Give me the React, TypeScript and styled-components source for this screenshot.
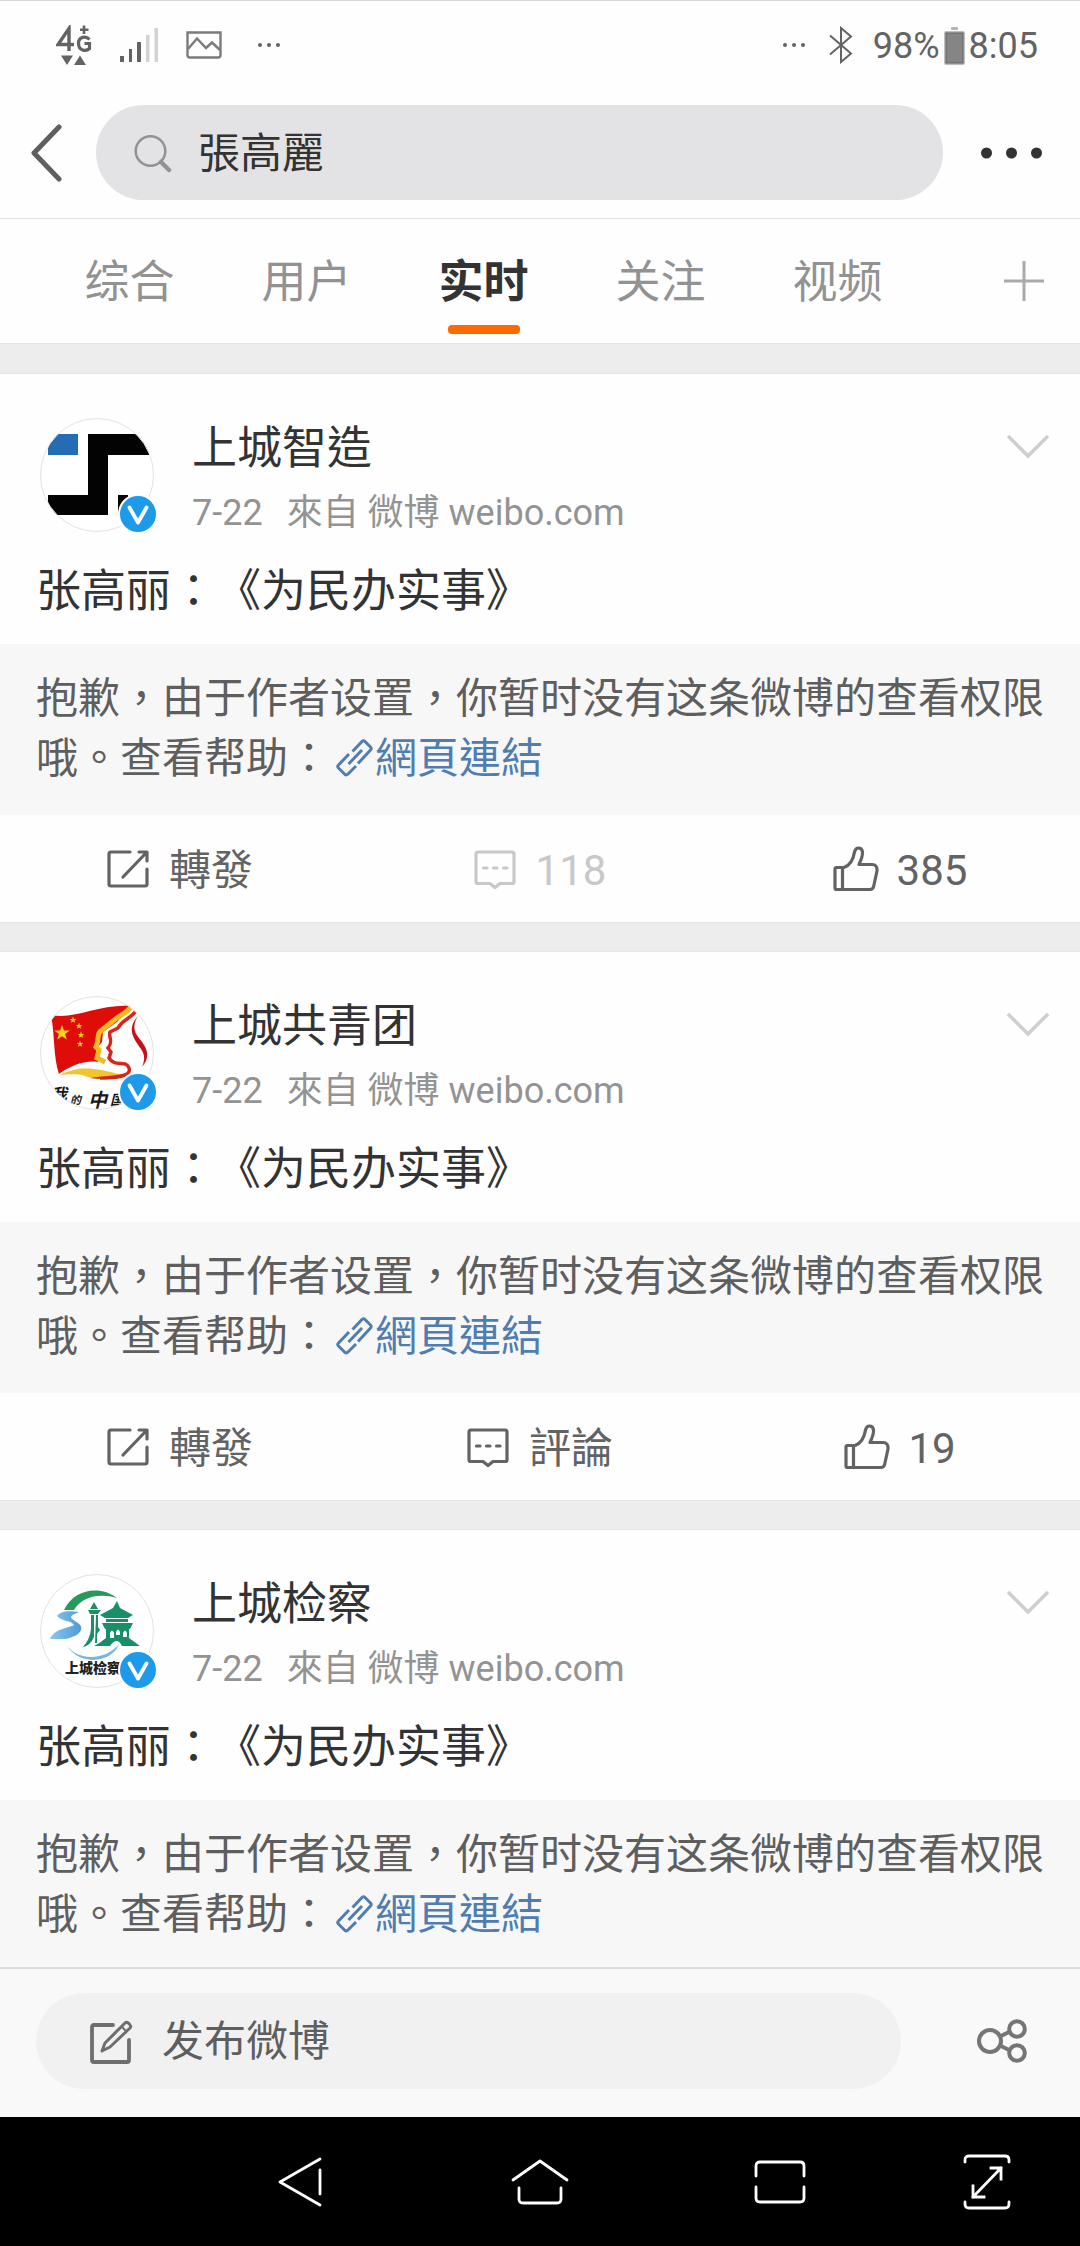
import React from "react";
import styled, { createGlobalStyle, css } from "styled-components";

const GlobalStyle = createGlobalStyle`
  *, *::before, *::after { box-sizing: border-box; }
  body {
    margin: 0;
    background: #fff;
    color: #333;
    font-family: Roboto, "Noto Sans CJK TC", sans-serif;
    text-spacing-trim: space-all;
  }
  button, input { font: inherit; color: inherit; }
  button { padding: 0; border: 0; background: none; cursor: pointer; }
  h2, p { margin: 0; padding: 0; font-weight: 400; }
  a { text-decoration: none; }
  svg { display: block; flex: none; }
`;

const Screen = styled.div`
  display: flex;
  flex-direction: column;
  height: 100vh;
  overflow: hidden;
  border-top: 1px solid #d6d6d6;
  background: #fefefe;
`;

/* ---------- status bar ---------- */

const StatusBar = styled.div`
  display: flex;
  justify-content: space-between;
  align-items: center;
  flex: none;
  height: 88px;
  padding: 0 42px 0 56px;
  color: #636363;
  font-size: 36px;
`;

const StatusGroup = styled.div<{ $gap: number }>`
  display: flex;
  align-items: center;
  gap: ${(p) => p.$gap}px;
`;

const StatusDots = styled.span`
  margin: 0 4px 0 8px;
`;

const Clock = styled.div`
  display: flex;
  align-items: center;
  gap: 4px;
  line-height: 44px;
  padding-top: 2px;
`;

/* ---------- search header ---------- */

const SearchHeader = styled.header`
  display: flex;
  align-items: center;
  flex: none;
  height: 130px;
  padding: 0 38px 2px 30px;
  border-bottom: 1px solid #e2e2e2;
`;

const IconButton = styled.button`
  display: flex;
  flex: none;
`;

const SearchBox = styled.label`
  display: flex;
  align-items: center;
  flex: 1;
  gap: 26px;
  height: 95px;
  margin: 0 38px 0 34px;
  padding: 2px 38px 0;
  border-radius: 48px;
  background: #e3e3e5;
`;

const SearchInput = styled.input`
  flex: 1;
  min-width: 0;
  height: 60px;
  padding: 0;
  border: 0;
  outline: 0;
  background: none;
  color: #333;
  font-size: 42px;
  line-height: 60px;
`;

/* ---------- tabs ---------- */

const TabBar = styled.nav`
  display: flex;
  justify-content: space-between;
  flex: none;
  height: 124px;
  padding: 0 36px 0 41px;
`;

const TabList = styled.div`
  display: flex;
`;

const Tab = styled.button<{ $active?: boolean }>`
  display: flex;
  flex-direction: column;
  align-items: center;
  width: 177px;
  padding-top: 32px;
  color: #929292;
  font-size: 45px;
  line-height: 64px;
  ${(p) =>
    p.$active &&
    css`
      color: #333;
      font-weight: 700;
      &::after {
        content: "";
        width: 72px;
        height: 9px;
        margin-top: 10px;
        border-radius: 4px;
        background: #ff6a00;
      }
    `}
`;

const AddTab = styled(IconButton)`
  align-self: center;
`;

/* ---------- feed ---------- */

const Feed = styled.main`
  display: flex;
  flex-direction: column;
  flex: 1;
  gap: 30px;
  min-height: 0;
  padding-top: 30px;
  overflow: hidden;
  background: #ededed;
  border-top: 1px solid #e4e4e4;
`;

const Card = styled.article`
  flex: none;
  background: #fefefe;
  box-shadow: 0 0 0 1px #e6e6e6;
`;

const CardHeader = styled.header`
  display: flex;
  align-items: flex-start;
  height: 182px;
  padding: 44px 30px 0 40px;
`;

const AvatarFrame = styled.div`
  position: relative;
  flex: none;
  width: 114px;
  height: 114px;
`;

const VerifiedBadge = styled.span`
  position: absolute;
  right: -4px;
  bottom: -2px;
  border: 2px solid #fff;
  border-radius: 50%;
  background: #1d9bea;
`;

const Byline = styled.div`
  flex: 1;
  margin-left: 38px;
  padding-top: 3px;
`;

const Author = styled.h2`
  font-size: 45px;
  line-height: 56px;
`;

const Meta = styled.p`
  display: flex;
  gap: 24px;
  margin-top: 14px;
  color: #939393;
  font-size: 36px;
  line-height: 44px;
`;

const MenuButton = styled(IconButton)`
  padding-top: 15px;
`;

const Title = styled.p`
  height: 88px;
  padding: 4px 36px 0;
  font-size: 45px;
  line-height: 64px;
`;

const Quote = styled.p`
  height: 171px;
  padding: 25px 30px 0 36px;
  background: #f7f7f7;
  color: #5e5e5e;
  font-size: 42px;
  line-height: 60px;
`;

const QuoteLink = styled.a`
  color: #507daf;

  svg {
    display: inline-block;
    margin: 0 2px 0 6px;
    vertical-align: -4px;
  }
`;

const Actions = styled.footer`
  display: grid;
  grid-template-columns: repeat(3, 1fr);
  height: 107px;
`;

const Action = styled.button<{ $muted?: boolean; $gap?: number }>`
  display: flex;
  align-items: center;
  justify-content: center;
  gap: ${(p) => p.$gap ?? 20}px;
  color: ${(p) => (p.$muted ? "#c8c8c8" : "#636363")};
  font-size: 42px;
  line-height: 60px;
`;

const ActionLabel = styled.span`
  padding-top: 4px;
`;

/* ---------- composer ---------- */

const Composer = styled.div`
  display: flex;
  align-items: center;
  justify-content: space-between;
  flex: none;
  height: 150px;
  padding: 0 53px 4px 36px;
  border-top: 2px solid #dcdcdc;
  background: #f9f9f9;
`;

const ComposeButton = styled.button`
  display: flex;
  align-items: center;
  flex: 1;
  gap: 29px;
  height: 96px;
  margin-right: 76px;
  padding: 2px 54px 0;
  border-radius: 48px;
  background: #f1f1f1;
  color: #5e5e5e;
  font-size: 42px;
  line-height: 60px;
`;

/* ---------- system navigation ---------- */

const SystemNav = styled.nav`
  display: grid;
  grid-template-columns: 1fr repeat(3, 240px) 1fr;
  flex: none;
  height: 129px;
  background: #000;
`;

const SystemKey = styled.button<{ $column: number }>`
  display: flex;
  align-items: center;
  justify-content: center;
  grid-column: ${(p) => p.$column};
  color: #fff;

  &:last-child {
    padding-right: 6px;
  }
`;

/* ---------- icons ---------- */

const Dots = ({ r, step, size }: { r: number; step: number; size: number }) => (
  <svg width={step * 2 + r * 2} height={size} fill="currentColor">
    {[0, 1, 2].map((i) => (
      <circle key={i} cx={r + i * step} cy={size / 2} r={r} />
    ))}
  </svg>
);

const NetworkIcon = () => (
  <svg width="36" height="40" fill="none" stroke="currentColor" strokeWidth="3.4">
    <path d="M13 26V3.500L2 19.500H18" />
    <path d="M33.500 14.500C30 10.500 22.500 11.500 22.500 18.500S30 27 33.500 23.500V18.500H28.500" strokeWidth="3.200" />
    <path d="M28 0.500V9M24 4.800H32.500" strokeWidth="2.600" />
    <path d="M5 30.500H17L11 40ZM18 40H30L24 30.500Z" fill="currentColor" stroke="none" />
  </svg>
);

const SignalIcon = () => (
  <svg width="38" height="34" fill="currentColor">
    <path d="M0 28H4V34H0ZM9 21H12V34H9ZM17 14H21V34H17Z" />
    <path d="M26 7H29.500V34H26ZM34.500 0H38V34H34.500Z" fill="#d2d2d2" />
  </svg>
);

const PictureIcon = () => (
  <svg width="36" height="28" fill="none" stroke="#7b7b7b" strokeWidth="2.400">
    <path d="M1.500 1.500H34.500V24Q34.500 26.500 32 26.500H4Q1.500 26.500 1.500 24Z" />
    <path d="M2 18L11 7.500L20 17L26 11.500L34 19" strokeWidth="2.500" />
  </svg>
);

const BluetoothIcon = () => (
  <svg width="24" height="38" fill="none" stroke="currentColor" strokeWidth="2">
    <path d="M1 9.500L22 27.500L12 36V2L22 10.500L1 28.500" />
  </svg>
);

const BatteryIcon = () => (
  <svg width="21" height="38">
    <rect x="7" y="0" width="7" height="3" rx="1" fill="#b5b5b5" />
    <rect x="0" y="4" width="21" height="34" rx="2" fill="#bdbdbd" />
    <rect x="2" y="6" width="17" height="30" fill="#858585" stroke="#636363" />
  </svg>
);

const BackIcon = () => (
  <svg width="32" height="58" fill="none" stroke="#5f5f5f" strokeWidth="5" strokeLinecap="round" strokeLinejoin="round">
    <path d="M29 3L4 29L29 55" />
  </svg>
);

const SearchIcon = () => (
  <svg width="38" height="38" fill="none" stroke="#929292">
    <circle cx="16.500" cy="16" r="14.800" strokeWidth="2.500" />
    <path d="M27 27L35 35" strokeWidth="4.500" strokeLinecap="round" />
  </svg>
);

const PlusIcon = () => (
  <svg width="40" height="40" stroke="#a9a9a9" strokeWidth="3">
    <path d="M0 20H40M20 0V40" />
  </svg>
);

const ChevronDownIcon = () => (
  <svg width="44" height="26" fill="none" stroke="#cfcfcf" strokeWidth="3.500">
    <path d="M2 3L22 23L42 3" />
  </svg>
);

const LinkIcon = () => (
  <svg width="37" height="38" fill="none" stroke="currentColor" strokeWidth="3" strokeLinejoin="round">
    <path d="M16.500 12.500L26 2.500Q27.500 1 29 2.500L34.500 8Q36 9.500 34.500 11L22 24.500" />
    <path d="M13 15L2.500 26Q1 27.500 2.500 29L9 35.500Q10.500 36.500 12 35L20 27" />
    <path d="M12.500 25L26 11" />
  </svg>
);

const RepostIcon = () => (
  <svg width="42" height="38" fill="none" stroke="currentColor" strokeWidth="3.200" strokeLinecap="round" strokeLinejoin="round">
    <path d="M23 2H4Q2 2 2 4V34Q2 36 4 36H38Q40 36 40 34V19" />
    <path d="M32 2H40V11M39 3L16 27" />
  </svg>
);

const CommentIcon = () => (
  <svg width="42" height="40" fill="none" stroke="currentColor" strokeWidth="3.200" strokeLinecap="round" strokeLinejoin="round">
    <path d="M4 3H38Q40 3 40 5V33Q40 34.500 38 34.500H26L21 38.500L16 34.500H4Q2 34.500 2 33V5Q2 3 4 3Z" />
    <path d="M9.500 19H13M19.500 19H23M29.500 19H33" />
  </svg>
);

const LikeIcon = () => (
  <svg width="46" height="46" fill="none" stroke="currentColor" strokeWidth="3.200" strokeLinecap="round" strokeLinejoin="round">
    <path d="M11 21.500H3.500Q2 21.500 2 23V42Q2 43.500 3.500 43.500H37Q39.500 43.500 40.500 41L44 25Q44.500 18.500 39 18.500H26Q30 10 29.500 6Q29 2 25.500 2Q22.500 2 21.500 6Q19.500 18.500 11 21.500Z" />
    <path d="M9.500 21.500V43" />
  </svg>
);

const ComposeIcon = () => (
  <svg width="43" height="44" fill="none" stroke="#6e6e6e" strokeWidth="3.800" strokeLinecap="round" strokeLinejoin="round">
    <path d="M23 5H4Q2 5 2 7V40Q2 42 4 42H37Q39 42 39 40V20" />
    <path d="M12 31L15 23L35 3Q37 1.500 39 3.500L40 5Q41.500 6.500 40 8L20 27Z" strokeWidth="3" />
    <path d="M32 7L36 11" strokeWidth="2" />
  </svg>
);

const ShareIcon = () => (
  <svg width="50" height="44" fill="none" stroke="#757575" strokeWidth="4">
    <circle cx="13" cy="22" r="11" />
    <circle cx="40" cy="10" r="7.800" />
    <circle cx="40" cy="34" r="7.800" />
    <path d="M23 17.500L33 12.500M23 26.500L33 31.500" />
  </svg>
);

const keyStroke = {
  fill: "none",
  stroke: "currentColor",
  strokeWidth: 2.8,
  strokeLinecap: "round" as const,
  strokeLinejoin: "round" as const,
};

const BackKeyIcon = () => (
  <svg width="44" height="50" {...keyStroke}>
    <path d="M42 2L2 25L42 48M42 13V37" />
  </svg>
);

const HomeKeyIcon = () => (
  <svg width="58" height="46" {...keyStroke}>
    <path d="M2 21L29 2L56 21M8 29V40Q8 44 12 44H46Q50 44 50 40V29" />
  </svg>
);

const RecentKeyIcon = () => (
  <svg width="52" height="44" {...keyStroke}>
    <path d="M2 16V6Q2 2 6 2H46Q50 2 50 6V16M2 27V38Q2 42 6 42H46Q50 42 50 38V27" />
  </svg>
);

const ExpandKeyIcon = () => (
  <svg width="48" height="56" {...keyStroke}>
    <path d="M2 8V6Q2 2 6 2H42Q46 2 46 6V8M2 48V50Q2 54 6 54H42Q46 54 46 50V48" />
    <path d="M10 43L38 14M28 14H38V25M10 32V43H21" strokeLinecap="square" strokeLinejoin="miter" />
  </svg>
);

const VIcon = () => (
  <svg width="36" height="36" viewBox="0 0 36 36" fill="none" stroke="#fff" strokeWidth="3.800" strokeLinecap="round" strokeLinejoin="round">
    <path d="M9.500 11.500L18 26.500L26.500 11.500" />
  </svg>
);

/* ---------- avatars ---------- */

const Disc = ({ id, children }: { id: string; children: React.ReactNode }) => (
  <svg width="114" height="114" viewBox="0 0 114 114">
    <clipPath id={id}>
      <circle cx="57" cy="57" r="56.500" />
    </clipPath>
    <circle cx="57" cy="57" r="56.500" fill="#fff" />
    <g clipPath={`url(#${id})`}>{children}</g>
    <circle cx="57" cy="57" r="56.500" fill="none" stroke="#e2e2e2" />
  </svg>
);

const MakersAvatar = () => (
  <Disc id="avatar-makers">
    <path d="M8 16H38V37H8Z" fill="#246cb4" />
    <path d="M48 16H109V37H68V97H8V77H48ZM78 77H88V97H78Z" fill="#030303" />
  </Disc>
);

const star = "M0-7L1.700-2.200L6.700-2.200L2.700.900L4.100 5.700L0 2.800L-4.100 5.700L-2.700.900L-6.700-2.200L-1.700-2.200Z";

const YouthAvatar = () => (
  <Disc id="avatar-youth">
    <path d="M11 19C35 24 58 8 91 10L77 26L63 36L62 46L56 53L58 66C45 64 30 70 19 78C13 60 15 39 11 19Z" fill="#df0d0a" />
    <path d="M91 11C86 18 78 20 72 26L62 34C56 37 60 42 56 51L59 54L57 62L65 66" fill="none" stroke="#f5b922" strokeWidth="5" />
    <path d="M96 15C90 23 82 24 78 32L70 36C68 41 74 45 68 52L71 56L69 62C75 72 86 63 89 72C92 81 75 82 60 82" fill="none" stroke="#d8251c" strokeWidth="3.500" />
    <path d="M98 20C86 33 94 43 101 53C105 59 105 64 102 71C112 59 106 51 99 42C93 35 93 28 98 20Z" fill="#c4121c" />
    <path d="M20 79C40 69 55 72 82 79C70 83 55 84 45 80C35 77 29 79 20 79Z" fill="#f2c530" />
    <path d="M50 82C60 80 70 81 86 77C80 84 66 84 50 82Z" fill="#d42617" />
    <g fill="#ffd21e">
      <path d={star} transform="translate(22 37) scale(1.15)" />
      <path d={star} transform="translate(33 24) scale(.5)" />
      <path d={star} transform="translate(39 30) scale(.5)" />
      <path d={star} transform="translate(41 39) scale(.5)" />
      <path d={star} transform="translate(40 48) scale(.5)" />
    </g>
    <g fill="#181818" fontFamily="Noto Sans CJK SC, sans-serif" fontStyle="italic" fontWeight="700">
      <text x="11" y="104" fontSize="16">我</text>
      <text x="30" y="108" fontSize="11">的</text>
      <text x="48" y="111" fontSize="19">中</text>
      <text x="70" y="109" fontSize="14">国</text>
    </g>
  </Disc>
);

const ProcuratorateAvatar = () => (
  <Disc id="avatar-procuratorate">
    <linearGradient id="river" x1="0" x2="1">
      <stop offset="0" stopColor="#8cc6ee" />
      <stop offset="1" stopColor="#4c9ad8" />
    </linearGradient>
    <path d="M24 36C34 15 60 11 77 24C60 19 42 22 34 36Z" fill="#26995f" />
    <path d="M39 38C26 36 20 38 17 42C23 48 31 46 34 51C27 55 15 54 10 65H25C41 62 45 54 38 49C33 45 25 43 39 38Z" fill="url(#river)" />
    <path d="M23 65C32 88 65 88 79 70C72 90 35 94 23 65Z" fill="#75b7e4" />
    <g fill="#169064">
      <path d="M54 28L58 35H50ZM48 36H61L58 40H50ZM51 41H54V63Q50 72 43 73Q50 65 51 55ZM56 41H58V53L60 56L57 60V69H55Z" />
      <path d="M77 27L80 34L93 41L88 44H65L60 41L73 34ZM66 45H88V48H66ZM62 49H93L90 55H65ZM66 55H89V64H66Z" />
      <path d="M54 72Q60 69 66 64Q77 57 89 64L100 72H82Q77 62 70 72Z" />
    </g>
    <path d="M70 64V59Q72 54 74 59V64ZM76 61V58Q78 53 80 58V61ZM83 63V59Q85 54 87 59V63Z" fill="#fff" />
    <text x="25" y="99" fontSize="14" fontWeight="900" fill="#222" fontFamily="Noto Sans CJK SC, sans-serif">
      上城检察
    </text>
  </Disc>
);

/* ---------- data ---------- */

interface Post {
  author: string;
  avatar: React.ReactNode;
  comments?: string;
  muted?: boolean;
  likes?: string;
}

const tabs = ["综合", "用户", "实时", "关注", "视频"];

const posts: Post[] = [
  { author: "上城智造", avatar: <MakersAvatar />, comments: "118", muted: true, likes: "385" },
  { author: "上城共青团", avatar: <YouthAvatar />, comments: "評論", likes: "19" },
  { author: "上城检察", avatar: <ProcuratorateAvatar /> },
];

const PostCard = ({ post }: { post: Post }) => (
  <Card>
    <CardHeader>
      <AvatarFrame>
        {post.avatar}
        <VerifiedBadge>
          <VIcon />
        </VerifiedBadge>
      </AvatarFrame>
      <Byline>
        <Author>{post.author}</Author>
        <Meta>
          <span>7-22</span>
          <span>來自 微博 weibo.com</span>
        </Meta>
      </Byline>
      <MenuButton aria-label="更多">
        <ChevronDownIcon />
      </MenuButton>
    </CardHeader>
    <Title>张高丽：《为民办实事》</Title>
    <Quote>
      抱歉，由于作者设置，你暂时没有这条微博的查看权限哦。查看帮助：
      <QuoteLink href="#help">
        <LinkIcon />
        網頁連結
      </QuoteLink>
    </Quote>
    {post.likes && (
      <Actions>
        <Action>
          <RepostIcon />
          <ActionLabel>轉發</ActionLabel>
        </Action>
        <Action $muted={post.muted}>
          <CommentIcon />
          <ActionLabel>{post.comments}</ActionLabel>
        </Action>
        <Action $gap={18}>
          <LikeIcon />
          <ActionLabel>{post.likes}</ActionLabel>
        </Action>
      </Actions>
    )}
  </Card>
);

export default function App() {
  return (
    <Screen>
      <GlobalStyle />
      <StatusBar>
        <StatusGroup $gap={28}>
          <NetworkIcon />
          <SignalIcon />
          <PictureIcon />
          <StatusDots>
            <Dots r={2} step={9} size={36} />
          </StatusDots>
        </StatusGroup>
        <StatusGroup $gap={20}>
          <StatusDots>
            <Dots r={2} step={9} size={36} />
          </StatusDots>
          <BluetoothIcon />
          <Clock>
            <span>98%</span>
            <BatteryIcon />
            <span>8:05</span>
          </Clock>
        </StatusGroup>
      </StatusBar>

      <SearchHeader>
        <IconButton aria-label="返回">
          <BackIcon />
        </IconButton>
        <SearchBox>
          <SearchIcon />
          <SearchInput aria-label="搜索" defaultValue="張高麗" />
        </SearchBox>
        <IconButton aria-label="更多">
          <Dots r={5.5} step={25} size={36} />
        </IconButton>
      </SearchHeader>

      <TabBar>
        <TabList>
          {tabs.map((tab) => (
            <Tab key={tab} $active={tab === "实时"}>
              {tab}
            </Tab>
          ))}
        </TabList>
        <AddTab aria-label="添加">
          <PlusIcon />
        </AddTab>
      </TabBar>

      <Feed>
        {posts.map((post) => (
          <PostCard key={post.author} post={post} />
        ))}
      </Feed>

      <Composer>
        <ComposeButton>
          <ComposeIcon />
          发布微博
        </ComposeButton>
        <IconButton aria-label="分享">
          <ShareIcon />
        </IconButton>
      </Composer>

      <SystemNav>
        <SystemKey $column={2} aria-label="返回">
          <BackKeyIcon />
        </SystemKey>
        <SystemKey $column={3} aria-label="主页">
          <HomeKeyIcon />
        </SystemKey>
        <SystemKey $column={4} aria-label="最近">
          <RecentKeyIcon />
        </SystemKey>
        <SystemKey $column={5} aria-label="全屏">
          <ExpandKeyIcon />
        </SystemKey>
      </SystemNav>
    </Screen>
  );
}
